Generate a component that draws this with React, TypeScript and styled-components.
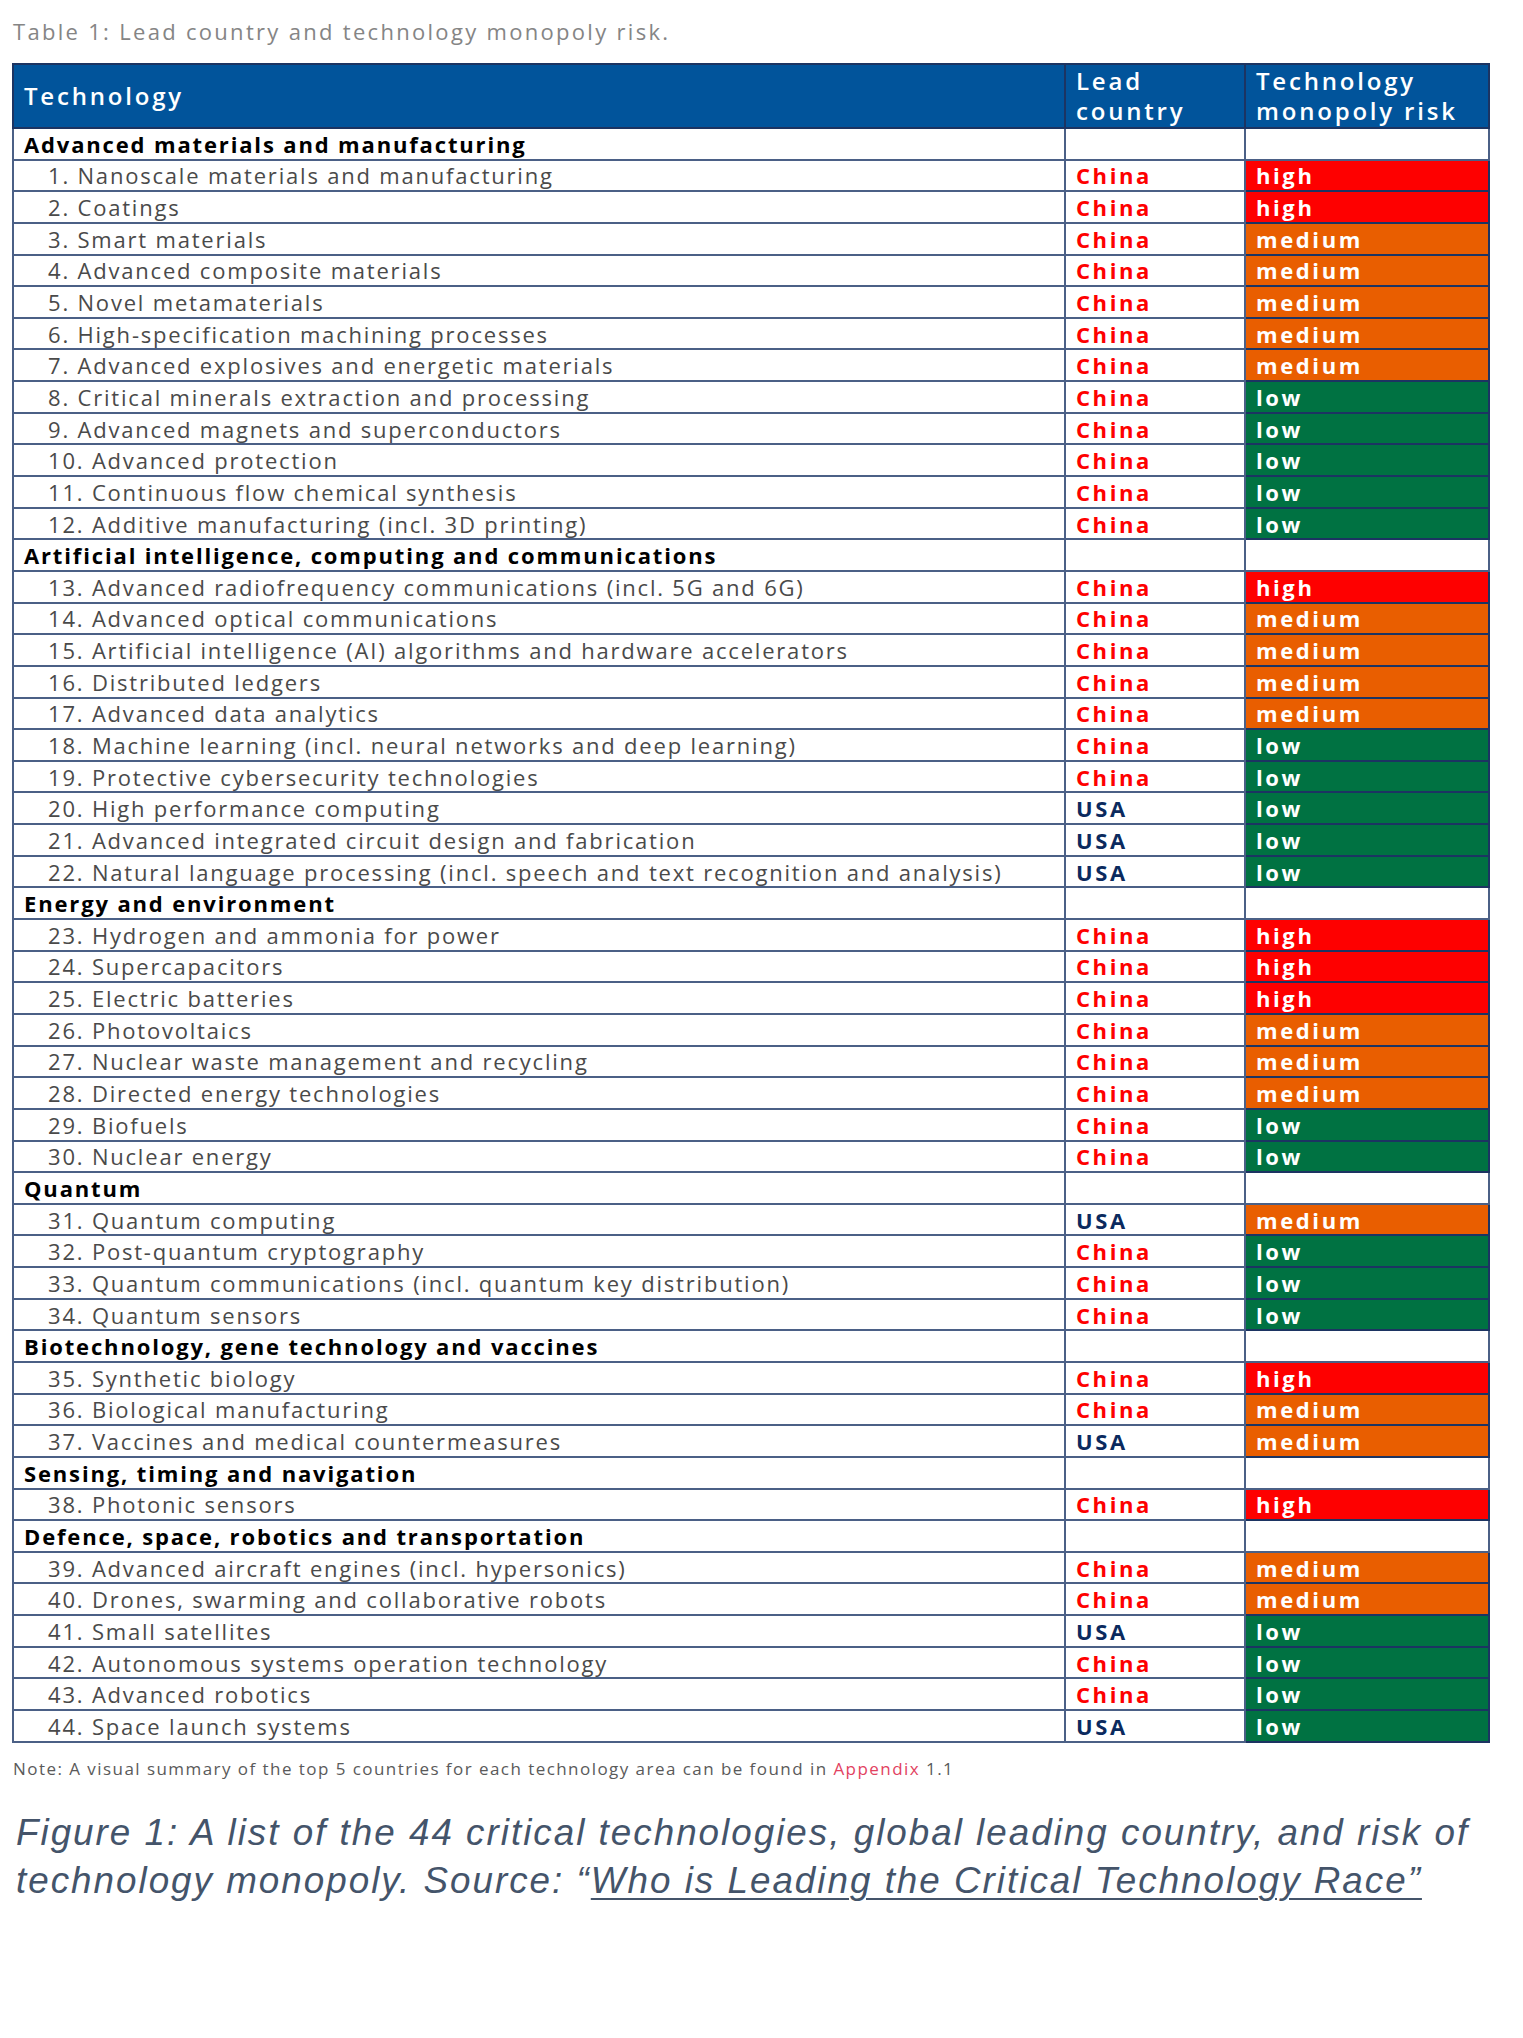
import React from "react";
import styled, { createGlobalStyle } from "styled-components";

type Risk = "high" | "medium" | "low";
type Country = "China" | "USA";

interface Item {
  name: string;
  country: Country;
  risk: Risk;
}

interface Section {
  title: string;
  items: Item[];
}

const sections: Section[] = [
  {
    title: "Advanced materials and manufacturing",
    items: [
      { name: "Nanoscale materials and manufacturing", country: "China", risk: "high" },
      { name: "Coatings", country: "China", risk: "high" },
      { name: "Smart materials", country: "China", risk: "medium" },
      { name: "Advanced composite materials", country: "China", risk: "medium" },
      { name: "Novel metamaterials", country: "China", risk: "medium" },
      { name: "High-specification machining processes", country: "China", risk: "medium" },
      { name: "Advanced explosives and energetic materials", country: "China", risk: "medium" },
      { name: "Critical minerals extraction and processing", country: "China", risk: "low" },
      { name: "Advanced magnets and superconductors", country: "China", risk: "low" },
      { name: "Advanced protection", country: "China", risk: "low" },
      { name: "Continuous flow chemical synthesis", country: "China", risk: "low" },
      { name: "Additive manufacturing (incl. 3D printing)", country: "China", risk: "low" },
    ],
  },
  {
    title: "Artificial intelligence, computing and communications",
    items: [
      { name: "Advanced radiofrequency communications (incl. 5G and 6G)", country: "China", risk: "high" },
      { name: "Advanced optical communications", country: "China", risk: "medium" },
      { name: "Artificial intelligence (AI) algorithms and hardware accelerators", country: "China", risk: "medium" },
      { name: "Distributed ledgers", country: "China", risk: "medium" },
      { name: "Advanced data analytics", country: "China", risk: "medium" },
      { name: "Machine learning (incl. neural networks and deep learning)", country: "China", risk: "low" },
      { name: "Protective cybersecurity technologies", country: "China", risk: "low" },
      { name: "High performance computing", country: "USA", risk: "low" },
      { name: "Advanced integrated circuit design and fabrication", country: "USA", risk: "low" },
      { name: "Natural language processing (incl. speech and text recognition and analysis)", country: "USA", risk: "low" },
    ],
  },
  {
    title: "Energy and environment",
    items: [
      { name: "Hydrogen and ammonia for power", country: "China", risk: "high" },
      { name: "Supercapacitors", country: "China", risk: "high" },
      { name: "Electric batteries", country: "China", risk: "high" },
      { name: "Photovoltaics", country: "China", risk: "medium" },
      { name: "Nuclear waste management and recycling", country: "China", risk: "medium" },
      { name: "Directed energy technologies", country: "China", risk: "medium" },
      { name: "Biofuels", country: "China", risk: "low" },
      { name: "Nuclear energy", country: "China", risk: "low" },
    ],
  },
  {
    title: "Quantum",
    items: [
      { name: "Quantum computing", country: "USA", risk: "medium" },
      { name: "Post-quantum cryptography", country: "China", risk: "low" },
      { name: "Quantum communications (incl. quantum key distribution)", country: "China", risk: "low" },
      { name: "Quantum sensors", country: "China", risk: "low" },
    ],
  },
  {
    title: "Biotechnology, gene technology and vaccines",
    items: [
      { name: "Synthetic biology", country: "China", risk: "high" },
      { name: "Biological manufacturing", country: "China", risk: "medium" },
      { name: "Vaccines and medical countermeasures", country: "USA", risk: "medium" },
    ],
  },
  {
    title: "Sensing, timing and navigation",
    items: [{ name: "Photonic sensors", country: "China", risk: "high" }],
  },
  {
    title: "Defence, space, robotics and transportation",
    items: [
      { name: "Advanced aircraft engines (incl. hypersonics)", country: "China", risk: "medium" },
      { name: "Drones, swarming and collaborative robots", country: "China", risk: "medium" },
      { name: "Small satellites", country: "USA", risk: "low" },
      { name: "Autonomous systems operation technology", country: "China", risk: "low" },
      { name: "Advanced robotics", country: "China", risk: "low" },
      { name: "Space launch systems", country: "USA", risk: "low" },
    ],
  },
];

const riskColors: Record<Risk, string> = {
  high: "#fe0000",
  medium: "#e95e00",
  low: "#007242",
};

const GlobalStyle = createGlobalStyle`
  body {
    margin: 0;
    background: #fff;
  }
`;

const Page = styled.div`
  width: 1523px;
  padding: 16px 0 0 12px;
  box-sizing: border-box;
  font-family: "Open Sans", sans-serif;
`;

const Caption = styled.div`
  font-size: 22px;
  letter-spacing: 2.3px;
  color: #858585;
  line-height: 30px;
  margin: 0 0 17px 1px;
`;

const Table = styled.table`
  width: 1478px;
  border-collapse: collapse;
  table-layout: fixed;
  border: 2px solid #3d5073;
`;

const HeadCell = styled.th<{ $width?: number }>`
  width: ${(p) => (p.$width ? `${p.$width}px` : "auto")};
  height: 64px;
  padding: 0 10px;
  box-sizing: border-box;
  background: #01549b;
  color: #fff;
  font-weight: 600;
  font-size: 24px;
  letter-spacing: 2.8px;
  line-height: 30px;
  text-align: left;
  border: 2px solid #1c3462;
`;

const Row = styled.tr`
  height: 31.65px;
`;

const Cell = styled.td`
  padding: 0 10px;
  border: 2px solid #4b6086;
  font-size: 22px;
  letter-spacing: 1.8px;
  line-height: 26px;
  color: #4a4a4a;
  white-space: nowrap;
  overflow: hidden;
`;

const SectionCell = styled(Cell)`
  font-weight: 700;
  letter-spacing: 1.85px;
  color: #000;
`;

const ItemCell = styled(Cell)`
  padding-left: 34px;
`;

const CountryCell = styled(Cell)<{ $country: Country }>`
  font-weight: 700;
  letter-spacing: 2.6px;
  color: ${(p) => (p.$country === "USA" ? "#0b2a5e" : "#fe0000")};
`;

const RiskCell = styled(Cell)<{ $risk: Risk }>`
  font-weight: 700;
  letter-spacing: 2.6px;
  color: #fff;
  background: ${(p) => riskColors[p.$risk]};
  border-color: #1c3462;
`;

const Note = styled.div`
  font-size: 17px;
  letter-spacing: 1.45px;
  color: #5a5a5a;
  margin: 14px 0 0 1px;
`;

const Appendix = styled.span`
  color: #e2425f;
`;

const Figure = styled.p`
  margin: 29px 0 0 4px;
  font-family: "Liberation Sans", Arial, sans-serif;
  font-style: italic;
  font-size: 36.8px;
  letter-spacing: 2px;
  line-height: 48px;
  color: #44546a;
`;

const SourceLink = styled.span`
  text-decoration: underline;
  text-decoration-thickness: 2px;
  text-underline-offset: 5px;
`;

export default function App() {
  let n = 0;
  return (
    <Page>
      <GlobalStyle />
      <Caption>Table 1: Lead country and technology monopoly risk.</Caption>
      <Table>
        <thead>
          <tr>
            <HeadCell>Technology</HeadCell>
            <HeadCell $width={180}>
              Lead
              <br />
              country
            </HeadCell>
            <HeadCell $width={244}>
              Technology
              <br />
              monopoly risk
            </HeadCell>
          </tr>
        </thead>
        <tbody>
          {sections.map((s) => (
            <React.Fragment key={s.title}>
              <Row>
                <SectionCell>{s.title}</SectionCell>
                <Cell />
                <Cell />
              </Row>
              {s.items.map((item) => {
                n += 1;
                return (
                  <Row key={item.name}>
                    <ItemCell>
                      {n}. {item.name}
                    </ItemCell>
                    <CountryCell $country={item.country}>{item.country}</CountryCell>
                    <RiskCell $risk={item.risk}>{item.risk}</RiskCell>
                  </Row>
                );
              })}
            </React.Fragment>
          ))}
        </tbody>
      </Table>
      <Note>
        Note: A visual summary of the top 5 countries for each technology area can be found in{" "}
        <Appendix>Appendix</Appendix> 1.1
      </Note>
      <Figure>
        Figure 1: A list of the 44 critical technologies, global leading country, and risk of
        <br />
        technology monopoly. Source: “<SourceLink>Who is Leading the Critical Technology Race”</SourceLink>
      </Figure>
    </Page>
  );
}
